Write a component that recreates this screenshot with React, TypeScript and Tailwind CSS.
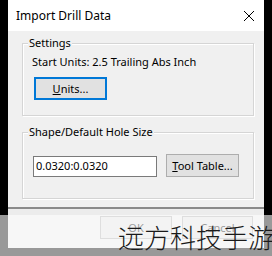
import React from "react";

const font = { fontFamily: '"Noto Sans", "Segoe UI", Arial, sans-serif' };

const GroupBox = ({ label, className, children }: { label: string; className: string; children: React.ReactNode }) => (
  <div className={`relative border border-[#d5d5d5] shadow-[inset_1px_1px_0_#ffffff,1px_1px_0_#ffffff] ${className}`}>
    <span className="absolute -top-[9px] left-[5px] bg-[#f0f0f0] px-[1px] text-[11px] leading-[16px] text-black">{label}</span>
    {children}
  </div>
);

const WinButton = ({ children, focused = false, className = "" }: { children: React.ReactNode; focused?: boolean; className?: string }) => (
  <button
    className={`h-[23px] flex items-center justify-center bg-[#e1e1e1] text-[11px] leading-none text-black ${
      focused ? "border-2 border-[#0078d7]" : "border border-[#adadad]"
    } ${className}`}
  >
    {children}
  </button>
);

export default function App() {
  return (
    <div className="relative w-[272px] h-[256px] overflow-hidden bg-black px-[8px]" style={font}>
      <div className="w-[256px] h-[248px] flex flex-col bg-[#f0f0f0]">
        {/* title bar */}
        <div className="h-[31px] bg-white flex items-center justify-between pl-[8px] pr-[9px]">
          <span className="text-[12px] leading-none text-black">Import Drill Data</span>
          <svg width="12" height="12" viewBox="0 0 12 12" className="text-black">
            <path d="M1 1 L11 11 M11 1 L1 11" stroke="currentColor" strokeWidth="1" />
          </svg>
        </div>

        <div className="flex-1 flex flex-col pl-[14px] pr-[10px]">
          <GroupBox label="Settings" className="mt-[12px] h-[73px] pl-[9px] pt-[10px]">
            <div className="text-[11px] leading-[16px] text-black">Start Units: 2.5 Trailing Abs Inch</div>
            <WinButton focused className="ml-[2px] mt-[7px] w-[73px]">
              <span><span className="underline">U</span>nits...</span>
            </WinButton>
          </GroupBox>

          <GroupBox label="Shape/Default Hole Size" className="mt-[16px] h-[67px] pl-[10px] pt-[21px]">
            <div className="flex items-end gap-[9px]">
              <div className="w-[124px] h-[21px] bg-white border border-[#7a7a7a] flex items-center pl-[2px] text-[11px] text-black">
                0.0320:0.0320
              </div>
              <WinButton className="w-[73px]">
                <span><span className="underline">T</span>ool Table...</span>
              </WinButton>
            </div>
          </GroupBox>
        </div>

        <div className="mt-[8px] border-t-2 border-[#8a8a8a] bg-[#ececec] h-[41px] flex justify-end gap-[10px] pt-[7px] pr-[11px]">
          <WinButton className="w-[72px]">OK</WinButton>
          <WinButton className="w-[71px]">Cancel</WinButton>
        </div>
      </div>

      {/* watermark overlay */}
      <div className="absolute left-0 right-0 top-[215px] bottom-0 bg-white/60">
        <span
          className="absolute left-[118px] top-[9px] whitespace-nowrap text-[26px] leading-none font-light text-[#1a1a1a]"
          style={{ fontFamily: '"Noto Sans CJK SC", sans-serif' }}
        >
          远方科技手游
        </span>
      </div>
    </div>
  );
}
